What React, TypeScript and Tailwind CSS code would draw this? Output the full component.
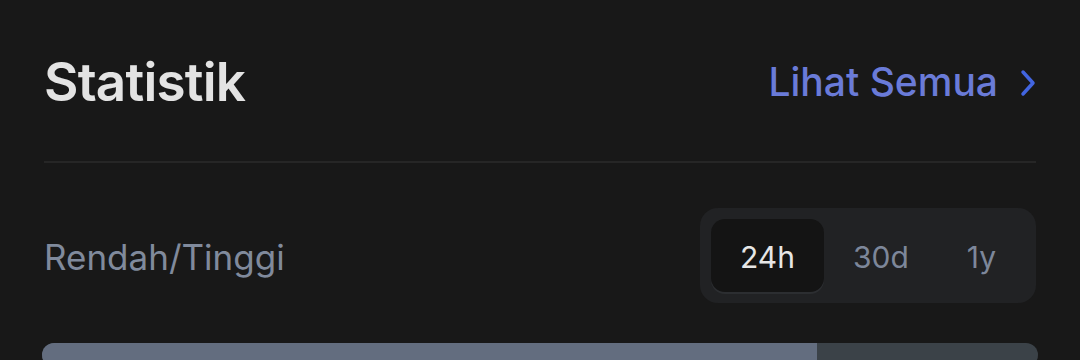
import React, { useState } from 'react'

function StatsCard() {
    const ranges: string[] = ['24h', '30d', '1y'];
    const [active, setActive] = useState<string>('24h');

    return (
        <div className="w-[1080px] h-[360px] overflow-hidden bg-[#181818] px-[42px] font-['Inter',sans-serif]">
            <div className="h-[161px] flex items-center justify-between pl-[2px] pt-[4px]">
                <h2 className="text-[53px] font-semibold text-[#e3e3e3] tracking-[-0.8px]">Statistik</h2>
                <a className="flex items-center gap-[22px] text-[#6a7bd8] text-[39px] font-medium cursor-pointer">
                    Lihat Semua
                    <svg width="16" height="28" viewBox="0 0 16 28" fill="none" className="mr-[2px]">
                        <path d="M3 3 L13 14 L3 25" stroke="#4265e0" strokeWidth="3.5" strokeLinecap="round" strokeLinejoin="round" />
                    </svg>
                </a>
            </div>
            <div className="h-[2px] bg-[#262626] mx-[2px]"></div>

            <div className="mt-[45px] flex items-center justify-between pl-[2px] pr-[2px]">
                <span className="text-[35px] text-[#808a9c] pt-[4px]">Rendah/Tinggi</span>
                <div className="flex h-[95px] p-[11px] rounded-[18px] bg-[#212224]">
                    {ranges.map((r: string) => (
                        <button
                            key={r}
                            onClick={() => setActive(r)}
                            className={r == active
                                ? 'px-[29px] pt-[3px] rounded-[14px] bg-[#141414] text-[#e6e6e6] text-[30px] shadow-[0_2px_0_#2c2e31]'
                                : 'px-[29px] pt-[3px] rounded-[14px] text-[#7d879a] text-[30px]'}
                        >
                            {r}
                        </button>
                    ))}
                </div>
            </div>

            <div className="mt-[40px] h-[24px] rounded-full bg-[#3b4248] overflow-hidden flex">
                <div className="h-full bg-[#636d7f]" style={{ width: '77.8%' }}></div>
            </div>
        </div>
    )
}

export default function App() {
    return <StatsCard />
}
